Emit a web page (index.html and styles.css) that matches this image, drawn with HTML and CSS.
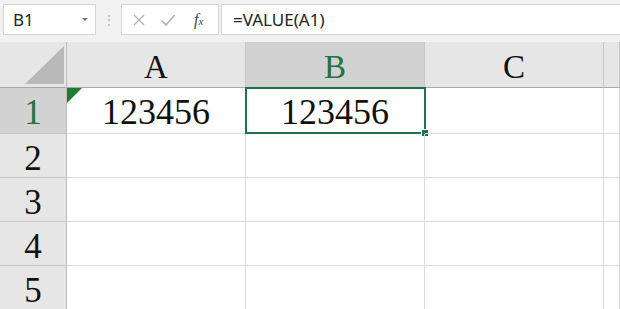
FILE: index.html
```html
<!DOCTYPE html>
<html lang="en">
<head>
    <meta charset="UTF-8">
    <title>VALUE - Sheet</title>
    <link rel="stylesheet" href="styles.css">
</head>
<body>
    <div class="formula-bar">
        <div class="name-box">
            <span>B1</span>
            <span class="drop"></span>
        </div>
        <div class="grip">&#8942;</div>
        <div class="fx-box">
            <svg class="ico" width="14" height="14" viewBox="0 0 14 14"><path d="M2 2 L12 12 M12 2 L2 12" stroke="#b3b3b3" stroke-width="1.4" fill="none"/></svg>
            <svg class="ico" width="16" height="14" viewBox="0 0 16 14"><path d="M1.5 7.5 L6 12 L14.5 2" stroke="#b3b3b3" stroke-width="1.6" fill="none"/></svg>
            <span class="fx">f<sub>x</sub></span>
        </div>
        <div class="formula-input">=VALUE(A1)</div>
    </div>

    <div class="sheet">
        <div class="corner"><span class="tri"></span></div>
        <div class="col-head">A</div>
        <div class="col-head active">B</div>
        <div class="col-head">C</div>
        <div class="col-head"></div>

        <div class="row-head active">1</div>
        <div class="cell err">123456<span class="flag"></span></div>
        <div class="cell sel">123456<span class="sel-box"><span class="handle"></span></span></div>
        <div class="cell"></div>
        <div class="cell"></div>

        <div class="row-head">2</div>
        <div class="cell"></div><div class="cell"></div><div class="cell"></div><div class="cell"></div>
        <div class="row-head">3</div>
        <div class="cell"></div><div class="cell"></div><div class="cell"></div><div class="cell"></div>
        <div class="row-head">4</div>
        <div class="cell"></div><div class="cell"></div><div class="cell"></div><div class="cell"></div>
        <div class="row-head">5</div>
        <div class="cell"></div><div class="cell"></div><div class="cell"></div><div class="cell"></div>
    </div>
</body>
</html>
```

FILE: styles.css
```css
:root {
    --green: #217346;
    --head: #e6e6e6;
    --head-on: #d2d2d2;
    --grid: #dadada;
}

* {
    margin: 0;
    padding: 0;
    box-sizing: border-box;
}

body {
    width: 620px;
    height: 309px;
    overflow: hidden;
    background: #fff;
    font-family: 'Noto Sans', sans-serif;
}

/* Formula bar */
.formula-bar {
    height: 42px;
    background: #f1f1f1;
    display: flex;
    align-items: flex-start;
    padding: 4px 0 0 3px;
}

.name-box, .fx-box, .formula-input {
    height: 31px;
    background: #fff;
    border: 1px solid #d5d5d5;
}

.name-box {
    width: 93px;
    display: flex;
    align-items: center;
    justify-content: space-between;
    padding: 0 7px 0 9px;
    font-size: 17px;
    color: #222;
}

.drop {
    width: 0;
    height: 0;
    border-left: 3px solid transparent;
    border-right: 3px solid transparent;
    border-top: 3px solid #777;
}

.grip {
    width: 25px;
    text-align: center;
    color: #b5b5b5;
    font-size: 14px;
    line-height: 31px;
}

.fx-box {
    width: 98px;
    display: flex;
    align-items: center;
    padding-left: 10px;
    gap: 14px;
}

.fx {
    font-family: 'Liberation Serif', serif;
    font-style: italic;
    font-size: 16px;
    color: #444;
    margin-left: 4px;
}

.fx sub {
    font-size: 11px;
    vertical-align: baseline;
}

.formula-input {
    flex: 1;
    margin-left: 2px;
    border-right: none;
    padding-left: 11px;
    font-size: 17px;
    line-height: 29px;
    color: #222;
}

/* Sheet grid */
.sheet {
    display: grid;
    grid-template-columns: 67px 179px 179px 179px 1fr;
    grid-template-rows: 46px 46px repeat(4, 44px);
    font-family: 'Liberation Serif', serif;
}

.corner {
    background: var(--head);
    border-right: 1px solid #bdbdbd;
    border-bottom: 1px solid #a8a8a8;
    display: flex;
    justify-content: flex-end;
    align-items: flex-end;
    padding: 0 2px 3px 0;
}

.tri {
    width: 39px;
    height: 38px;
    background: #b9b9b9;
    clip-path: polygon(100% 0, 100% 100%, 0 100%);
}

.col-head {
    background: var(--head);
    border-right: 1px solid #c6c6c6;
    border-bottom: 1px solid #a8a8a8;
    text-align: center;
    font-size: 33px;
    line-height: 50px;
    color: #111;
}

.row-head {
    background: var(--head);
    border-right: 1px solid #bdbdbd;
    border-bottom: 1px solid #c6c6c6;
    text-align: center;
    font-size: 35px;
    line-height: 49px;
    color: #111;
}

.col-head.active, .row-head.active {
    background: var(--head-on);
    color: var(--green);
}

.cell {
    position: relative;
    border-right: 1px solid var(--grid);
    border-bottom: 1px solid var(--grid);
    text-align: center;
    font-size: 36px;
    line-height: 49px;
    color: #111;
}

.flag {
    position: absolute;
    top: 0;
    left: 0;
    width: 15px;
    height: 15px;
    background: #1e7d35;
    clip-path: polygon(0 0, 100% 0, 0 100%);
}

.sel-box {
    position: absolute;
    top: -1px;
    left: -1px;
    right: -2px;
    bottom: -1px;
    border: 2px solid var(--green);
}

.handle {
    position: absolute;
    right: -4px;
    bottom: -4px;
    width: 6px;
    height: 6px;
    background: var(--green);
    outline: 1px solid #fff;
}
```
